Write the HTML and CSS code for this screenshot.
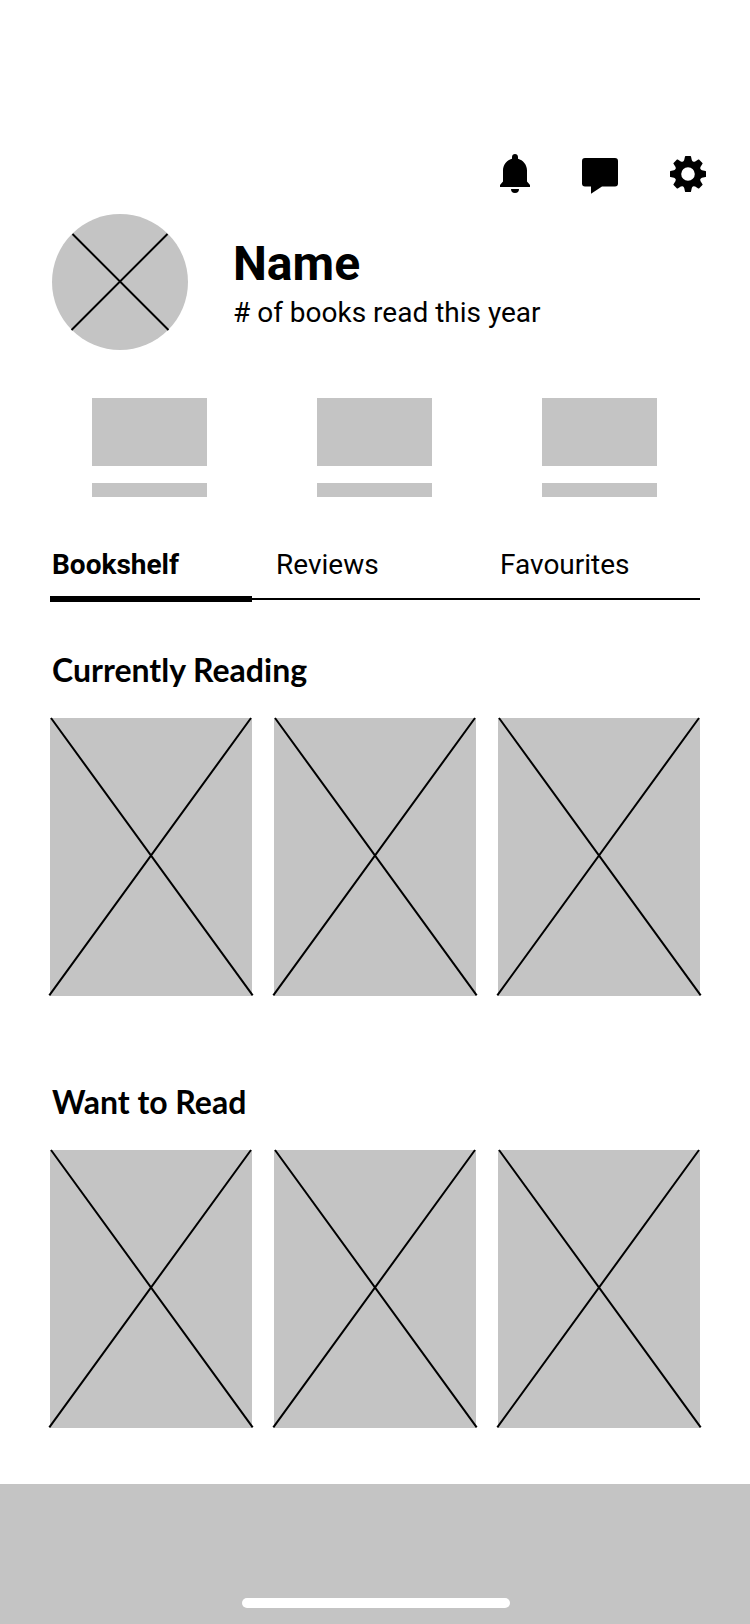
FILE: index.html
```html
<!DOCTYPE html>
<html lang="en">
<head>
<meta charset="utf-8">
<meta name="viewport" content="width=device-width, initial-scale=1">
<title>Profile</title>
<link rel="stylesheet" href="styles.css">
</head>
<body>
<svg class="defs" aria-hidden="true">
  <symbol id="cover" viewBox="0 0 202 278" overflow="visible">
    <path class="cross" d="M1 0 202.7 277.3M201 0-.7 277.3"/>
  </symbol>
</svg>
<header class="toolbar">
  <button class="icon-button" type="button" aria-label="Notifications">
    <svg width="30" height="40" viewBox="0 0 30 40"><path d="M15 0c-1.700 0-3 1.300-3 3v1.800C7 6.200 3 10.800 3 16.500V27.600L0 31v2h30v-2l-3-3.400V16.500C27 10.800 23 6.200 18 4.800V3c0-1.700-1.300-3-3-3zM11 35a4 4 0 0 0 8 0z"/></svg>
  </button>
  <button class="icon-button" type="button" aria-label="Messages">
    <svg width="36" height="40" viewBox="0 0 36 40"><path d="M3 4h30a3 3 0 0 1 3 3v22.600a3 3 0 0 1-3 3H20L9 39.700V32.600H3a3 3 0 0 1-3-3V7a3 3 0 0 1 3-3z"/></svg>
  </button>
  <button class="icon-button" type="button" aria-label="Settings">
    <svg width="36" height="40" viewBox="-18 -20 36 40">
      <defs><path id="tooth" d="M-2.400-18H2.400Q2.900-18 3-17.500L3.800-14Q4.300-12.500 5.500-12V-10H-5.500V-12Q-4.300-12.500-3.800-14L-3-17.500Q-2.900-18-2.400-18z"/></defs>
      <circle r="9.900" fill="none" stroke="#000" stroke-width="6.200"/>
      <use href="#tooth"/><use href="#tooth" transform="rotate(45)"/><use href="#tooth" transform="rotate(90)"/><use href="#tooth" transform="rotate(135)"/>
      <use href="#tooth" transform="rotate(180)"/><use href="#tooth" transform="rotate(225)"/><use href="#tooth" transform="rotate(270)"/><use href="#tooth" transform="rotate(315)"/>
    </svg>
  </button>
</header>
<main class="content">
  <section class="profile">
    <svg class="avatar" viewBox="0 0 136 136" role="img" aria-label="Profile picture">
      <circle class="fill" cx="68" cy="68" r="68"/>
      <path class="cross" d="M20.500 20 116.500 116M115.500 20 19.500 116"/>
    </svg>
    <div class="profile-text">
      <h1 class="name">Name</h1>
      <p class="summary"># of books read this year</p>
    </div>
  </section>
  <div class="stats">
    <div class="stat"><div class="stat-box"></div><div class="stat-bar"></div></div>
    <div class="stat"><div class="stat-box"></div><div class="stat-bar"></div></div>
    <div class="stat"><div class="stat-box"></div><div class="stat-bar"></div></div>
  </div>
  <nav class="tabs">
    <a class="tab tab-active" href="#bookshelf" aria-current="page">Bookshelf</a>
    <a class="tab" href="#reviews">Reviews</a>
    <a class="tab" href="#favourites">Favourites</a>
  </nav>
  <section class="shelf">
    <h2 class="shelf-title">Currently Reading</h2>
    <div class="books">
      <svg class="book" viewBox="0 0 202 278"><use href="#cover"/></svg>
      <svg class="book" viewBox="0 0 202 278"><use href="#cover"/></svg>
      <svg class="book" viewBox="0 0 202 278"><use href="#cover"/></svg>
    </div>
  </section>
  <section class="shelf">
    <h2 class="shelf-title">Want to Read</h2>
    <div class="books">
      <svg class="book" viewBox="0 0 202 278"><use href="#cover"/></svg>
      <svg class="book" viewBox="0 0 202 278"><use href="#cover"/></svg>
      <svg class="book" viewBox="0 0 202 278"><use href="#cover"/></svg>
    </div>
  </section>
</main>
<footer class="bottom-bar"><div class="home-indicator"></div></footer>
</body>
</html>
```

FILE: styles.css
```css
* {
  box-sizing: border-box;
}

body {
  display: flex;
  flex-direction: column;
  min-height: 100vh;
  margin: 0;
  background: #fff;
  color: #000;
  font-family: Roboto, "Liberation Sans", sans-serif;
  font-size: 28px;
  line-height: 32px;
}

h1,
h2,
p {
  margin: 0;
}

.defs {
  position: absolute;
  width: 0;
  height: 0;
}

.toolbar {
  display: flex;
  justify-content: flex-end;
  gap: 52px;
  padding: 154px 44px 20px;
}

.icon-button {
  display: flex;
  padding: 0;
  border: 0;
  background: none;
  color: inherit;
  cursor: pointer;
}

.content {
  padding: 0 50px 56px;
}

.fill {
  fill: #c4c4c4;
}

.cross {
  fill: none;
  stroke: #000;
  stroke-width: 2;
}

.profile {
  display: flex;
  gap: 45px;
  padding-left: 2px;
}

.avatar {
  flex: none;
  width: 136px;
  height: 136px;
}

.profile-text {
  padding-top: 22px;
}

.name {
  margin-bottom: 5px;
  font-size: 48px;
  line-height: 56px;
  font-weight: 700;
}

.stats {
  display: flex;
  justify-content: space-between;
  padding: 48px 43px 0 42px;
}

.stat {
  display: grid;
  gap: 17px;
  width: 115px;
}

.stat-box {
  height: 68px;
  background: #c4c4c4;
}

.stat-bar {
  height: 14px;
  background: #c4c4c4;
}

.tabs {
  position: relative;
  display: grid;
  grid-template-columns: repeat(3, 1fr);
  column-gap: 22px;
  margin-top: 52px;
}

.tabs::after {
  content: "";
  position: absolute;
  right: 0;
  bottom: 2px;
  left: 0;
  height: 2px;
  background: #000;
}

.tab {
  padding: 0 2px 15px;
  border-bottom: 6px solid transparent;
  color: inherit;
  text-decoration: none;
}

.tab-active {
  border-color: #000;
  font-weight: 700;
}

.shelf {
  padding-top: 48px;
}

.shelf + .shelf {
  padding-top: 86px;
}

.shelf-title {
  padding: 0 2px 28px;
  font-family: Lato, "Liberation Sans", sans-serif;
  font-size: 32px;
  line-height: 40px;
  font-weight: 700;
}

.books {
  display: grid;
  grid-template-columns: repeat(3, 1fr);
  gap: 22px;
}

.book {
  display: block;
  width: 100%;
  overflow: visible;
  background: #c4c4c4;
}

.bottom-bar {
  display: flex;
  flex: 1;
  align-items: flex-end;
  justify-content: center;
  min-height: 140px;
  padding: 0 0 16px 2px;
  background: #c4c4c4;
}

.home-indicator {
  width: 268px;
  height: 10px;
  border-radius: 5px;
  background: #fff;
}
```
